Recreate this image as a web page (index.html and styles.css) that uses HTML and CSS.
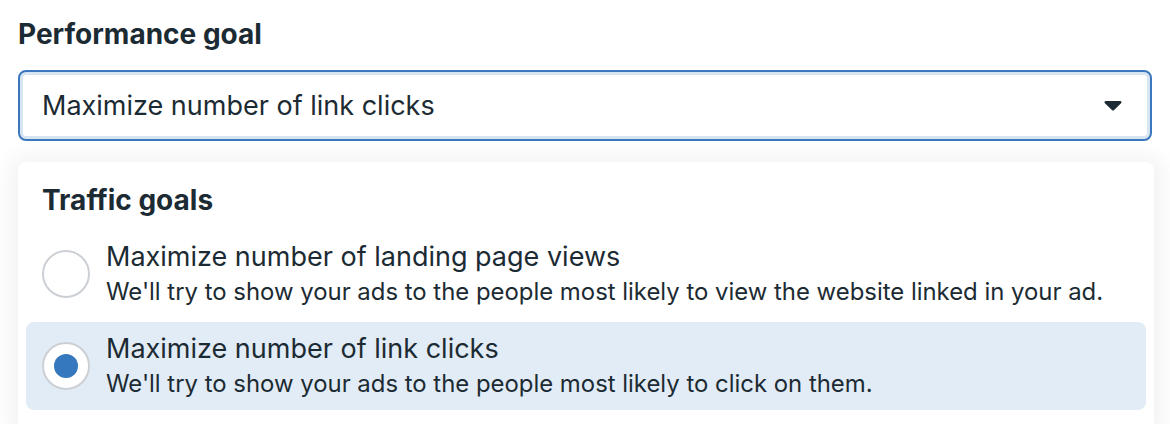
FILE: index.html
```html
<!DOCTYPE html>
<html lang="en">
<head>
<meta charset="UTF-8">
<title>Performance goal</title>
<link rel="stylesheet" href="styles.css">
</head>
<body>
<div class="field">
    <div class="label">Performance goal</div>
    <div class="select">
        <span>Maximize number of link clicks</span>
        <svg class="caret" width="18" height="10" viewBox="0 0 18 10"><path d="M0.5 1.3 Q0.5 0 1.8 0 H16.2 Q17.5 0 17.5 1.3 Q17.5 2 16.8 2.6 L10.1 9.1 Q9 10.1 7.9 9.1 L1.2 2.6 Q0.5 2 0.5 1.3 Z" fill="#1c2b33"/></svg>
    </div>
</div>
<div class="menu">
    <div class="group-title">Traffic goals</div>
    <div class="option">
        <span class="radio"></span>
        <div class="text">
            <div class="title">Maximize number of landing page views</div>
            <div class="desc">We'll try to show your ads to the people most likely to view the website linked in your ad.</div>
        </div>
    </div>
    <div class="option selected">
        <span class="radio"></span>
        <div class="text">
            <div class="title">Maximize number of link clicks</div>
            <div class="desc">We'll try to show your ads to the people most likely to click on them.</div>
        </div>
    </div>
</div>
</body>
</html>
```

FILE: styles.css
```css
html {
  overflow: hidden;
}

body {
  font-family: 'Inter', 'Liberation Sans', sans-serif;
  color: #1c2b33;
  background-color: #fff;
  margin: 0;
  padding: 0 18px;
  height: 424px;
  box-sizing: border-box;
  overflow: hidden;
}

.field {
  padding-top: 16px;
}

.label {
  font-size: 28px;
  font-weight: 700;
  line-height: 36px;
  margin-bottom: 18px;
}

.select {
  display: flex;
  align-items: center;
  justify-content: space-between;
  height: 67px;
  padding: 0 28px 0 22px;
  border: 2px solid #3a77bd;
  border-radius: 8px;
  box-shadow: inset 0 0 0 3px #d7e4f2;
  font-size: 27px;
}

.caret {
  display: block;
}

.menu {
  margin-top: 21px;
  width: 1136px;
  height: 262px;
  background-color: #fff;
  border-radius: 8px 8px 0 0;
  padding: 8px 8px 0 8px;
  box-sizing: border-box;
  box-shadow: 0 2px 22px 8px rgba(0, 0, 0, 0.055);
}

.group-title {
  font-size: 28px;
  font-weight: 700;
  line-height: 60px;
  padding-left: 16px;
}

.option {
  display: flex;
  align-items: center;
  padding: 0 16px;
  height: 88px;
  border-radius: 8px;
  margin-bottom: 4px;
}

.option.selected {
  background-color: #e2ecf6;
}

.radio {
  width: 44px;
  height: 44px;
  border: 2px solid #ccd0d5;
  border-radius: 50%;
  background-color: #fff;
  flex-shrink: 0;
  margin-right: 16px;
  position: relative;
}

.selected .radio::after {
  content: '';
  position: absolute;
  left: 10px;
  top: 10px;
  width: 24px;
  height: 24px;
  border-radius: 50%;
  background-color: #3578be;
}

.title {
  font-size: 27px;
  line-height: 34px;
}

.desc {
  font-size: 23.9px;
  line-height: 32px;
  margin-top: 2px;
}
```
